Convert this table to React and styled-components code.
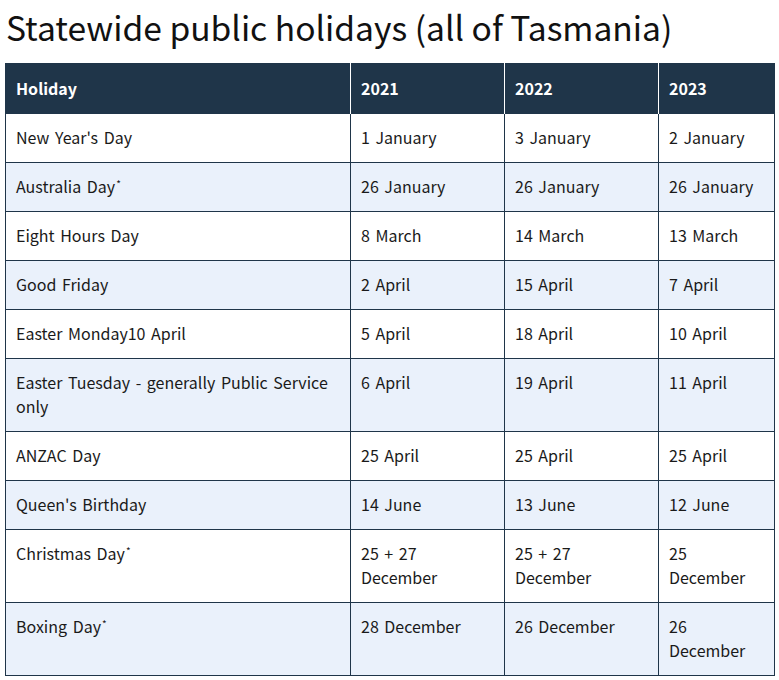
import styled, { createGlobalStyle } from "styled-components";

const GlobalStyle = createGlobalStyle`
  body {
    margin: 0;
    font-family: "Noto Sans CJK KR", "Noto Sans", sans-serif;
    color: #1a1a1a;
    background: #ffffff;
  }
`;

const rows = [
  { name: "New Year's Day", y21: "1 January", y22: "3 January", y23: "2 January" },
  { name: "Australia Day", star: true, y21: "26 January", y22: "26 January", y23: "26 January" },
  { name: "Eight Hours Day", y21: "8 March", y22: "14 March", y23: "13 March" },
  { name: "Good Friday", y21: "2 April", y22: "15 April", y23: "7 April" },
  { name: "Easter Monday10 April", y21: "5 April", y22: "18 April", y23: "10 April" },
  { name: "Easter Tuesday - generally Public Service only", y21: "6 April", y22: "19 April", y23: "11 April" },
  { name: "ANZAC Day", y21: "25 April", y22: "25 April", y23: "25 April" },
  { name: "Queen's Birthday", y21: "14 June", y22: "13 June", y23: "12 June" },
  { name: "Christmas Day", star: true, y21: "25 + 27 December", y22: "25 + 27 December", y23: "25 December" },
  { name: "Boxing Day", star: true, y21: "28 December", y22: "26 December", y23: "26 December" },
];

function App() {
  return (
    <Page>
      <GlobalStyle />
      <Title>Statewide public holidays (all of Tasmania)</Title>
      <Table>
        <colgroup>
          <col style={{ width: 345 }} />
          <col style={{ width: 154 }} />
          <col style={{ width: 154 }} />
          <col />
        </colgroup>
        <thead>
          <tr>
            <Th>Holiday</Th>
            <Th>2021</Th>
            <Th>2022</Th>
            <Th>2023</Th>
          </tr>
        </thead>
        <tbody>
          {rows.map((r) => (
            <Row key={r.name}>
              <Td>
                {r.name}
                {r.star && <Star>*</Star>}
              </Td>
              <Td>{r.y21}</Td>
              <Td>{r.y22}</Td>
              <Td>{r.y23}</Td>
            </Row>
          ))}
        </tbody>
      </Table>
    </Page>
  );
}

export default App;

const Page = styled.div`
  padding: 0 4px 0 5px;
`;

const Title = styled.h2`
  font-size: 33.6px;
  font-weight: 400;
  line-height: 48px;
  margin: 3px 0 12px 1px;
  color: #111;
`;

const Table = styled.table`
  width: 770px;
  table-layout: fixed;
  border-collapse: collapse;
  border: 1px solid #1f3549;
  font-size: 16px;
  line-height: 24px;
  word-spacing: 2px;
`;

const Th = styled.th`
  background: #1f3549;
  color: #ffffff;
  font-weight: 700;
  text-align: left;
  padding: 12px 10px 13px;
  border-left: 1px solid #ffffff;
  &:first-child {
    border-left: 1px solid #1f3549;
  }
`;

const Row = styled.tr`
  background: #ffffff;
  &:nth-child(even) {
    background: #eaf1fb;
  }
`;

const Td = styled.td`
  vertical-align: top;
  padding: 11px 10px 13px;
  border: 1px solid #1f3549;
  color: #1a1a1a;
`;

const Star = styled.sup`
  font-size: 10px;
  line-height: 0;
  position: relative;
  top: 1px;
  margin-left: 1px;
`;
